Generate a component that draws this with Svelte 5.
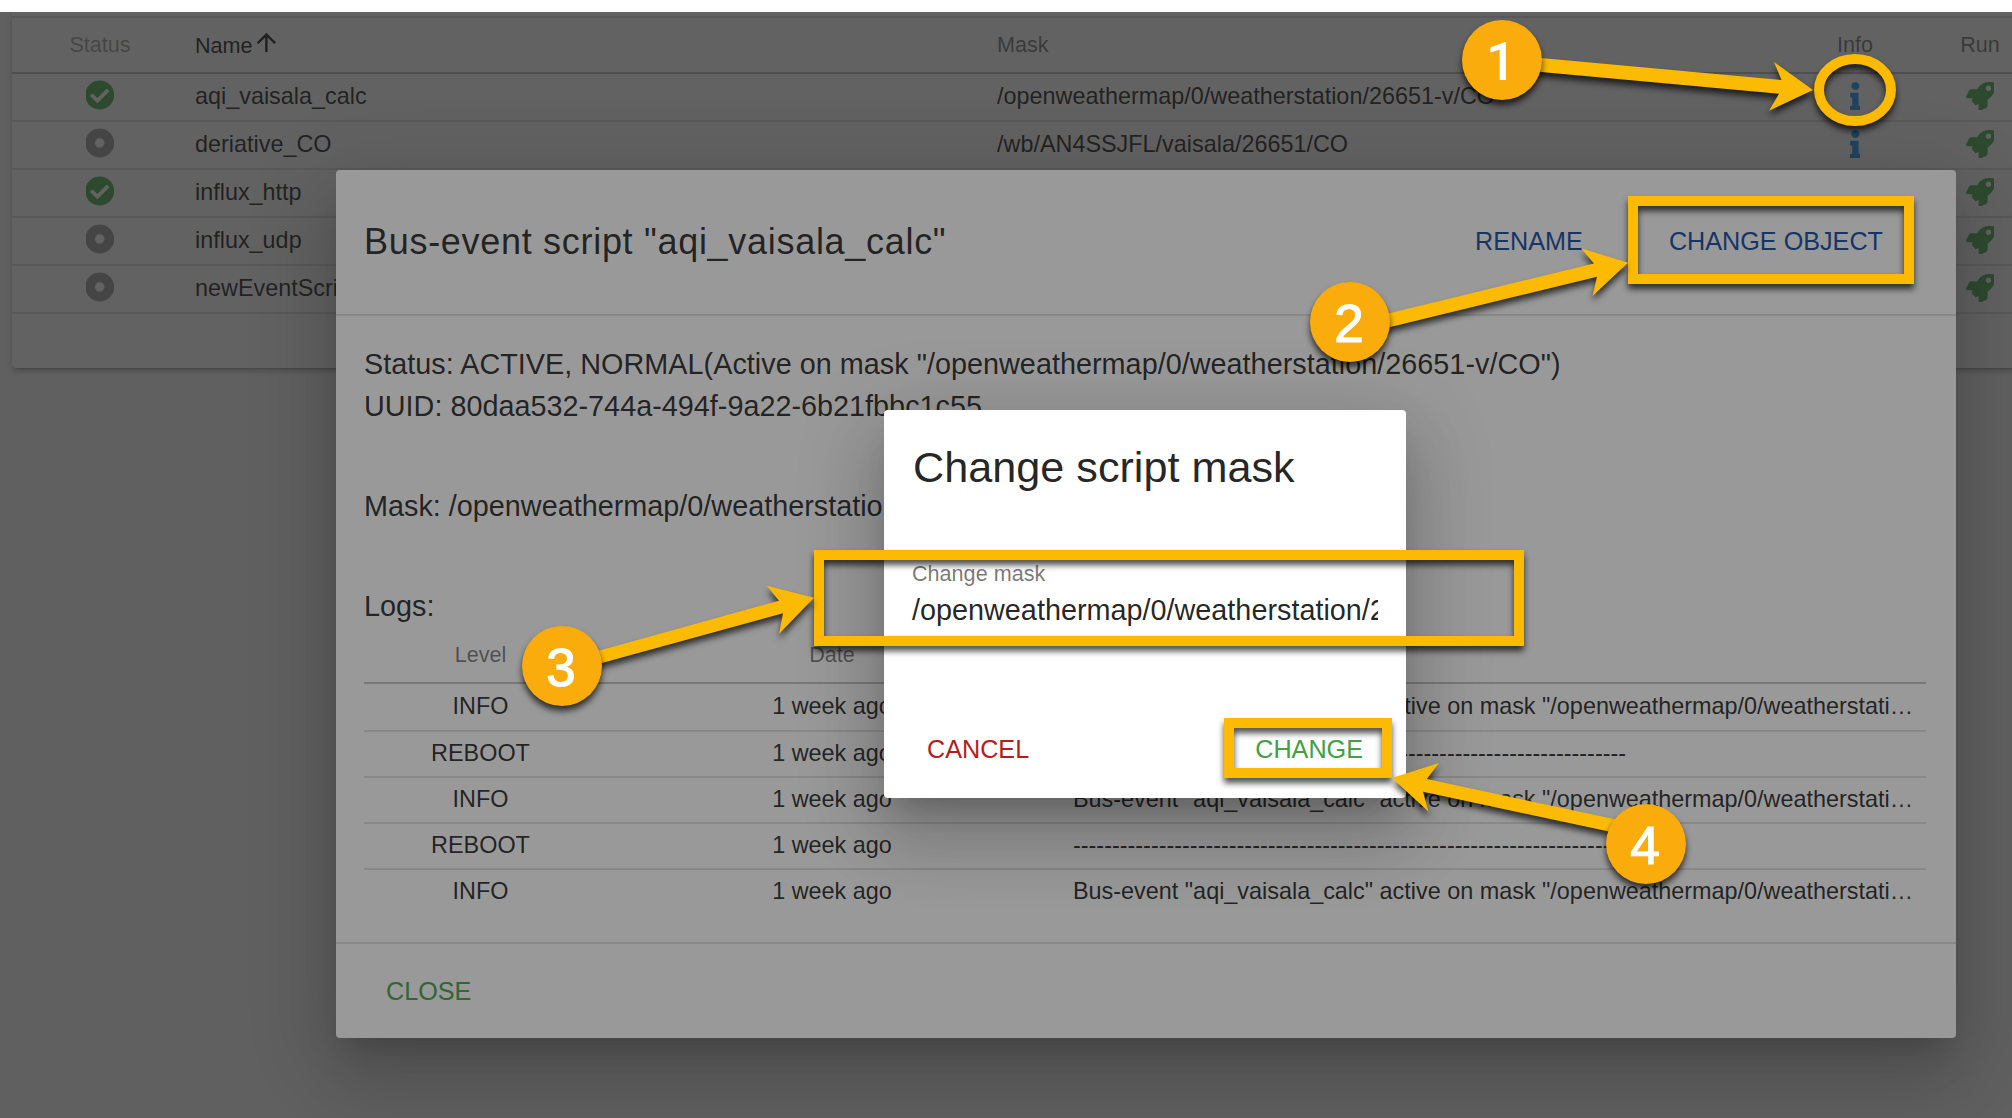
<script>
  const scripts = [
    { active: true, name: 'aqi_vaisala_calc', mask: '/openweathermap/0/weatherstation/26651-v/CO' },
    { active: false, name: 'deriative_CO', mask: '/wb/AN4SSJFL/vaisala/26651/CO' },
    { active: true, name: 'influx_http', mask: '' },
    { active: false, name: 'influx_udp', mask: '' },
    { active: false, name: 'newEventScri', mask: '' }
  ];
  const activeLine = 'Bus-event "aqi_vaisala_calc" active on mask "/openweathermap/0/weatherstation/26651-v/CO"';
  const dashes = '-'.repeat(71);
  const logs = [
    { level: 'INFO', date: '1 week ago', text: activeLine },
    { level: 'REBOOT', date: '1 week ago', text: dashes },
    { level: 'INFO', date: '1 week ago', text: activeLine },
    { level: 'REBOOT', date: '1 week ago', text: dashes },
    { level: 'INFO', date: '1 week ago', text: activeLine }
  ];
  const arrows = [
    '1530,57 1781.5,80 1774,62 1813,90 1769,110.7 1779,93.7 1530,71',
    '1370,318 1594,263.5 1581,248.3 1628,262.7 1592.5,296 1597,276.7 1370,332',
    '580,656 779,600.7 766.8,585.7 814,597.7 779,634 783,613.3 580,669',
    '1630,822.5 1426.8,779 1439,763 1392,778 1428.6,811.7 1423,791.7 1630,836'
  ];
  const frames = [
    { x: 1628, y: 196, w: 286, h: 88 },
    { x: 814, y: 550, w: 710, h: 96 },
    { x: 1224, y: 718, w: 168, h: 60 }
  ];
  const badges = [
    { x: 1502, y: 60 },
    { x: 1350, y: 322 },
    { x: 562, y: 666 },
    { x: 1646, y: 844 }
  ];
</script>

<div class="screen">
  <div class="strip"></div>
  <main class="page">
    <section class="card">
      <div class="row head">
        <span class="c faint">Status</span>
        <span class="name sorted">Name<svg class="sort" viewBox="0 0 24 24"><path d="M4 12l1.41 1.41L11 7.83V20h2V7.83l5.58 5.59L20 12l-8-8-8 8z" /></svg></span>
        <span>Mask</span>
        <span class="c">Info</span>
        <span class="c">Run</span>
      </div>
      {#each scripts as s}
        <div class="row">
          <span class="c">
            {#if s.active}
              <svg class="state on" viewBox="22 0 468 512"><path d="M504 256c0 136.967-111.033 248-248 248S8 392.967 8 256 119.033 8 256 8s248 111.033 248 248zM227.314 387.314l184-184c6.248-6.248 6.248-16.379 0-22.627l-22.627-22.627c-6.248-6.249-16.379-6.249-22.628 0L216 308.118l-70.059-70.059c-6.248-6.248-16.379-6.248-22.628 0l-22.627 22.627c-6.248 6.248-6.248 16.379 0 22.627l104 104c6.249 6.249 16.379 6.249 22.628.001z" /></svg>
            {:else}
              <svg class="state" viewBox="22 0 468 512"><path d="M256 8C119.033 8 8 119.033 8 256s111.033 248 248 248 248-111.033 248-248S392.967 8 256 8zm80 248c0 44.112-35.888 80-80 80s-80-35.888-80-80 35.888-80 80-80 80 35.888 80 80z" /></svg>
            {/if}
          </span>
          <span class="name">{s.name}</span>
          <span>{s.mask}</span>
          <span class="c"><svg class="info" viewBox="0 0 192 512"><path d="M20 424.229h20V279.771H20c-11.046 0-20-8.954-20-20V212c0-11.046 8.954-20 20-20h112c11.046 0 20 8.954 20 20v212.229h20c11.046 0 20 8.954 20 20V492c0 11.046-8.954 20-20 20H20c-11.046 0-20-8.954-20-20v-47.771c0-11.046 8.954-20 20-20zM96 0C56.235 0 24 32.235 24 72s32.235 72 72 72 72-32.235 72-72S135.764 0 96 0z" /></svg></span>
          <span class="c"><svg class="rocket" viewBox="0 0 512 512"><path d="M505.1 19.1C503.8 13 499 8.2 492.9 6.9 460.7 0 435.5 0 410.4 0 307.2 0 245.3 55.2 199.1 128H94.9c-18.2 0-34.8 10.3-42.9 26.5L2.6 253.3c-8 16 3.6 34.7 21.5 34.7h95.1c-5.9 12.8-11.9 25.5-18 37.7-3.1 6.2-1.9 13.6 3 18.5l63.6 63.6c4.9 4.9 12.3 6.1 18.5 3 12.2-6.1 24.9-12 37.7-17.9V488c0 17.8 18.8 29.4 34.7 21.5l98.7-49.4c16.3-8.1 26.5-24.8 26.5-42.9V312.8c72.6-46.4 128-108.1 128-211.1.1-25.2.1-50.4-6.8-82.6zM400 160c-26.5 0-48-21.5-48-48s21.5-48 48-48 48 21.5 48 48-21.5 48-48 48z" /></svg></span>
        </div>
      {/each}
      <div class="foot"></div>
    </section>

    <div class="overlay outer">
      <div class="dialog big">
        <header>
          <h2>Bus-event script "aqi_vaisala_calc"</h2>
          <button class="blue">RENAME</button>
          <button class="blue">CHANGE OBJECT</button>
        </header>
        <div class="body">
          <p class="status">Status: ACTIVE, NORMAL(Active on mask "/openweathermap/0/weatherstation/26651-v/CO")</p>
          <p>UUID: 80daa532-744a-494f-9a22-6b21fbbc1c55</p>
          <p class="gap">Mask: /openweathermap/0/weatherstatio</p>
          <p class="gap">Logs:</p>
          <div class="logs">
            <div class="log loghead"><span>Level</span><span>Date</span></div>
            {#each logs as l}
              <div class="log"><span>{l.level}</span><span>{l.date}</span><span class="msg">{l.text}</span></div>
            {/each}
          </div>
        </div>
        <footer><button class="green">CLOSE</button></footer>
      </div>
    </div>

    <div class="overlay inner">
      <div class="dialog small">
        <h1>Change script mask</h1>
        <div class="field">
          <span class="label">Change mask</span>
          <span class="value">/openweathermap/0/weatherstation/26651-v/CO</span>
        </div>
        <div class="actions">
          <button class="red">CANCEL</button>
          <button class="green">CHANGE</button>
        </div>
      </div>
    </div>
  </main>

  <svg class="marks" width="2012" height="1118" viewBox="0 0 2012 1118">
    {#each frames as f}
      <rect class="stroke" x={f.x + 5} y={f.y + 5} width={f.w - 10} height={f.h - 10} />
    {/each}
    <ellipse class="stroke" cx="1855" cy="90" rx="36" ry="31" />
    {#each arrows as points}
      <polygon class="arrow" {points} />
    {/each}
    {#each badges as b, i}
      <circle class="badge" cx={b.x} cy={b.y} r="40" />
      <text class="digit" class:plain={i === 0} x={b.x - 1} y={b.y + 20}>{i + 1}</text>
    {/each}
  </svg>
</div>

<style>
  :global(body) { margin: 0; background: #fff; }
  .screen {
    position: relative;
    width: 2012px;
    height: 1118px;
    overflow: hidden;
    font-family: "Liberation Sans", Arial, sans-serif;
    color: rgba(0, 0, 0, 0.87);
  }
  .strip { height: 12px; background: #fff; }
  .page {
    position: relative;
    height: 1106px;
    overflow: hidden;
    background: #fafafa;
  }
  .card {
    box-sizing: border-box;
    width: 2040px;
    margin-left: 12px;
    background: #fff;
    border-radius: 0 0 4px 4px;
    padding-top: 4px;
    box-shadow: 0 5px 2px -4px rgba(0, 0, 0, 0.2), 0 4px 4px rgba(0, 0, 0, 0.14), 0 2px 9px rgba(0, 0, 0, 0.12);
  }
  .row {
    box-sizing: border-box;
    display: grid;
    grid-template-columns: 176px 809px 801px 114px 136px;
    align-items: center;
    height: 48px;
    border-bottom: 2px solid rgba(0, 0, 0, 0.12);
    font-size: 23.4px;
    line-height: 28px;
    white-space: nowrap;
  }
  .row > span { margin-top: -2px; }
  .row .name { padding-left: 7px; }
  .head {
    height: 58px;
    border-top: 2px solid rgba(0, 0, 0, 0.12);
    border-bottom-color: rgba(0, 0, 0, 0.24);
    font-size: 21.6px;
    color: rgba(0, 0, 0, 0.54);
  }
  .head > span { margin-top: 0; }
  .head > .name { margin-top: -3px; }
  .faint { color: rgba(0, 0, 0, 0.38); }
  .sorted { color: rgba(0, 0, 0, 0.87); }
  .c { display: flex; justify-content: center; }
  svg { display: block; flex: none; }
  .sort { display: inline-block; width: 28.8px; height: 28.8px; margin-left: -1px; vertical-align: -4px; fill: currentColor; }
  .state { width: 27.4px; height: 30px; margin-top: -2px; fill: #9e9e9e; }
  .on { fill: #4caf50; }
  .info { width: 10.8px; height: 28.8px; fill: #2196f3; }
  .rocket { width: 28.8px; height: 28.8px; fill: #4caf50; }
  .foot { height: 54px; }

  .overlay {
    position: absolute;
    inset: 0;
    background: rgba(33, 33, 33, 0.46);
    display: flex;
    align-items: flex-start;
  }
  .dialog {
    box-sizing: border-box;
    background: #fff;
    border-radius: 4px;
    box-shadow: 0 20px 27px -13px rgba(0, 0, 0, 0.2), 0 43px 68px 5px rgba(0, 0, 0, 0.14), 0 16px 83px 14px rgba(0, 0, 0, 0.12);
  }
  .big { width: 1620px; height: 868px; margin: 158px 0 0 336px; display: flex; flex-direction: column; }
  .small { width: 522px; height: 388px; margin: 398px 0 0 884px; }
  h1, h2, p { margin: 0; font-weight: 400; }
  button {
    border: 0;
    padding: 0;
    background: none;
    font: 400 25.2px/36px "Liberation Sans", Arial, sans-serif;
    white-space: nowrap;
  }
  .blue { color: #0d47a1; }
  .green { color: #43a047; }
  .red { color: #b71c1c; }
  header {
    box-sizing: border-box;
    height: 146px;
    display: flex;
    align-items: center;
    padding: 0 73px 2px 28px;
    gap: 86px;
    border-bottom: 2px solid rgba(0, 0, 0, 0.12);
  }
  h2 { flex: 1; padding-top: 2px; font-size: 36px; line-height: 48px; letter-spacing: 0.7px; }
  .body { flex: 1; padding: 27px 30px 0 28px; }
  p { font-size: 28.8px; line-height: 42px; white-space: nowrap; }
  .status { letter-spacing: 0.015px; }
  .gap { margin-top: 58px; }
  .logs { padding-top: 1px; }
  .log {
    box-sizing: border-box;
    display: grid;
    grid-template-columns: 233px 470px 1fr;
    align-items: center;
    height: 46px;
    padding-bottom: 3px;
    border-bottom: 2px solid rgba(0, 0, 0, 0.12);
    font-size: 23.4px;
    line-height: 32px;
    text-align: center;
    white-space: nowrap;
  }
  .log:last-child { border-bottom-color: transparent; }
  .loghead {
    height: 56px;
    padding-bottom: 0;
    border-bottom-color: rgba(0, 0, 0, 0.24);
    font-size: 21.6px;
    color: rgba(0, 0, 0, 0.54);
  }
  .loghead + .log { height: 48px; }
  .msg { text-align: left; padding: 0 0 0 6px; margin-right: 10px; overflow: hidden; text-overflow: ellipsis; }
  footer {
    box-sizing: border-box;
    height: 96px;
    padding: 29px 0 0 50px;
    border-top: 2px solid rgba(0, 0, 0, 0.12);
  }
  .small h1 { padding: 28px 29px 0; font-size: 43.2px; line-height: 58px; white-space: nowrap; }
  .field { display: flex; flex-direction: column; margin: 63px 28px 0; }
  .label { font-size: 21.6px; line-height: 30px; color: rgba(0, 0, 0, 0.54); }
  .value { font-size: 28.8px; line-height: 42px; white-space: nowrap; overflow: hidden; }
  .actions { display: flex; justify-content: space-between; padding: 100px 43px 0 43px; }

  .marks { position: absolute; inset: 0; }
  .stroke { fill: none; stroke: #fdba02; stroke-width: 10; filter: drop-shadow(0 5px 3px rgba(0, 0, 0, 0.7)); }
  .arrow { fill: #fdba02; filter: drop-shadow(0 5px 3px rgba(0, 0, 0, 0.7)); }
  .badge { fill: #f9ac0c; filter: drop-shadow(0 5px 3px rgba(0, 0, 0, 0.7)); }
  .digit { fill: #fff; stroke: #fff; stroke-width: 1.2; font-size: 53px; text-anchor: middle; }
  .plain { font-family: Roboto, "Liberation Sans", sans-serif; font-weight: 500; stroke: none; }
</style>
